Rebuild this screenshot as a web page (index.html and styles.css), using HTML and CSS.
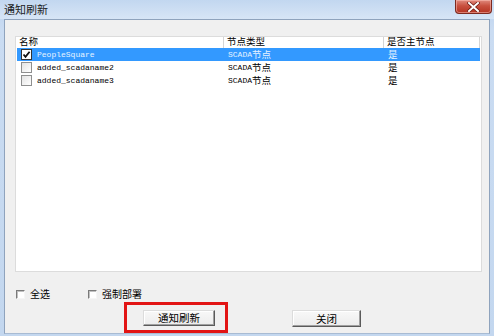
FILE: index.html
```html
<!DOCTYPE html>
<html lang="zh-CN">
<head>
    <meta charset="UTF-8">
    <title>通知刷新</title>
    <link rel="stylesheet" href="styles.css">
</head>
<body>
    <div class="window">
        <div class="titlebar">
            <span class="title">通知刷新</span>
            <div class="close-btn">
                <svg width="13" height="10" viewBox="0 0 13 10">
                    <path d="M2 1 L11 9 M11 1 L2 9" stroke="#6b1a12" stroke-width="3.4" stroke-linecap="square"/>
                    <path d="M2 1 L11 9 M11 1 L2 9" stroke="#ffffff" stroke-width="2" stroke-linecap="square"/>
                </svg>
            </div>
        </div>

        <div class="client">
            <div class="list">
                <div class="list-header">
                    <div class="col">名称</div>
                    <div class="col">节点类型</div>
                    <div class="col">是否主节点</div>
                </div>

                <div class="row selected">
                    <div class="cell name">
                        <span class="check checked">
                            <svg width="9" height="9" viewBox="0 0 9 9">
                                <path d="M1.5 4.5 L3.5 6.8 L7.6 1.8" fill="none" stroke="#111" stroke-width="1.8"/>
                            </svg>
                        </span>
                        <span class="mono">PeopleSquare</span>
                    </div>
                    <div class="cell"><span class="mono">SCADA</span>节点</div>
                    <div class="cell">是</div>
                </div>

                <div class="row">
                    <div class="cell name">
                        <span class="check"></span>
                        <span class="mono">added_scadaname2</span>
                    </div>
                    <div class="cell"><span class="mono">SCADA</span>节点</div>
                    <div class="cell">是</div>
                </div>

                <div class="row">
                    <div class="cell name">
                        <span class="check"></span>
                        <span class="mono">added_scadaname3</span>
                    </div>
                    <div class="cell"><span class="mono">SCADA</span>节点</div>
                    <div class="cell">是</div>
                </div>
            </div>

            <div class="options">
                <label class="option select-all"><span class="box"></span>全选</label>
                <label class="option"><span class="box"></span>强制部署</label>
            </div>

            <div class="actions">
                <div class="highlight">
                    <button class="btn notify">通知刷新</button>
                </div>
                <button class="btn close">关闭</button>
            </div>
        </div>
    </div>
</body>
</html>
```

FILE: styles.css
```css
* {
    margin: 0;
    padding: 0;
    box-sizing: border-box;
}

body {
    width: 494px;
    height: 336px;
    overflow: hidden;
    font-family: "Noto Sans CJK SC", "Liberation Sans", sans-serif;
    font-size: 10px;
    color: #000;
}

.window {
    width: 494px;
    height: 336px;
    background: linear-gradient(#bcd2ee, #cadcf2 30px, #c3d7ef);
    display: flex;
    flex-direction: column;
}

/* title bar */
.titlebar {
    height: 19px;
    display: flex;
    justify-content: space-between;
    align-items: flex-start;
    padding: 0 2px 0 4px;
    background: linear-gradient(#c2d7f0, #d7e5f6);
}

.title {
    font-size: 11px;
    line-height: 18px;
    color: #1b1b1b;
}

.close-btn {
    width: 37px;
    height: 14px;
    display: flex;
    align-items: center;
    justify-content: center;
    background: linear-gradient(#e08a7e, #c8503f 45%, #b43322);
    border: 1px solid #7c2a20;
    border-top: none;
    border-radius: 0 0 4px 4px;
    box-shadow: inset 0 0 0 1px rgba(255, 200, 190, 0.5);
}

/* client area */
.client {
    margin: 0 4px 0 4px;
    height: 315px;
    background: #f0f0f0;
    border: 1px solid #8fa3bd;
    border-bottom-color: #a8bbd3;
    overflow: hidden;
}

.list {
    margin: 16px 0 0 10px;
    width: 467px;
    height: 236px;
    background: #fff;
    border: 1px solid #dcdcdc;
}

.list-header {
    display: grid;
    grid-template-columns: 208px 160px 96px;
    height: 11px;
    background: #fff;
}

.list-header .col {
    padding: 0 0 2px 3px;
    font-size: 9.5px;
    line-height: 9px;
    border-right: 1px solid #d5d5d5;
    white-space: nowrap;
}

.row {
    display: grid;
    grid-template-columns: 207px 160px 1fr;
    height: 13px;
    margin: 0 1px;
    align-items: center;
}

.row.selected {
    background: #3399ff;
    color: #e6f3ff;
}

.cell {
    padding-left: 4px;
    font-size: 9.5px;
    line-height: 13px;
    white-space: nowrap;
    display: flex;
    align-items: center;
}

.cell.name {
    gap: 5px;
}

.mono {
    font-family: "Liberation Mono", monospace;
    font-size: 8px;
}

.check {
    width: 11px;
    height: 11px;
    background: linear-gradient(135deg, #e3e3e3, #ffffff);
    border: 1px solid #8e8f8f;
    display: flex;
    align-items: center;
    justify-content: center;
}

.check.checked {
    background: #fff;
    border-color: #333;
}

/* bottom options */
.options {
    display: flex;
    margin: 16px 0 0 11px;
    height: 12px;
}

.option {
    display: flex;
    align-items: center;
    gap: 5px;
    line-height: 12px;
}

.option.select-all {
    width: 72px;
}

.box {
    width: 9px;
    height: 9px;
    background: #fff;
    border: 1px solid;
    border-color: #7a7a7a #f6f6f6 #f6f6f6 #7a7a7a;
    box-shadow: inset 1px 1px 0 #c0c0c0;
}

/* buttons */
.actions {
    display: flex;
    align-items: flex-start;
    margin: 2px 0 0 119px;
}

.highlight {
    width: 104px;
    height: 31px;
    border: 3px solid #e21414;
    padding: 5px 0 0 16px;
}

.btn {
    font-family: "Noto Sans CJK SC", sans-serif;
    font-size: 10.5px;
    line-height: 14px;
    color: #000;
    background: linear-gradient(#f8f8f8, #ececec);
    border: 1px solid;
    border-color: #dcdcdc #5a5a5a #5a5a5a #dcdcdc;
    box-shadow: inset -1px -1px 0 #a0a0a0, inset 1px 1px 0 #fff;
}

.btn.notify {
    width: 72px;
    height: 16px;
}

.btn.close {
    width: 69px;
    height: 17px;
    margin: 8px 0 0 64px;
}
```
